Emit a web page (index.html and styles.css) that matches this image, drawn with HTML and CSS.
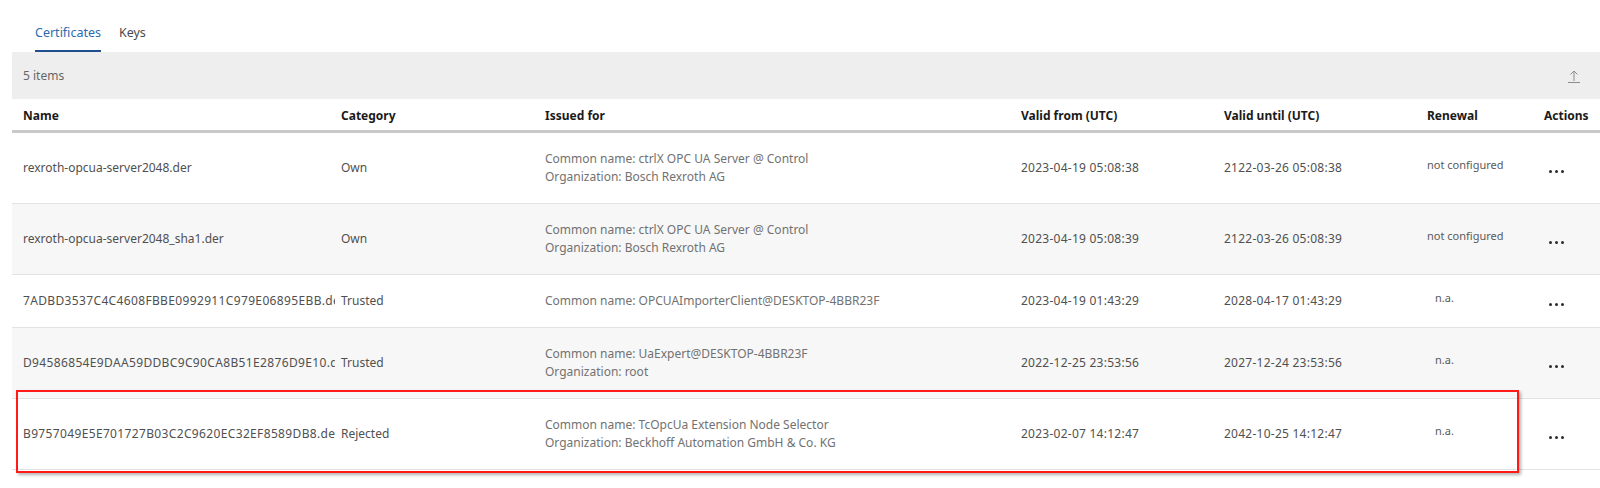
FILE: index.html
```html
<!DOCTYPE html>
<html lang="en">
<head>
    <meta charset="UTF-8">
    <meta name="viewport" content="width=device-width, initial-scale=1.0">
    <title>Certificates</title>
    <link rel="stylesheet" href="styles.css">
</head>
<body>
    <div class="page">
        <div class="tabs">
            <div class="tab tab-active">Certificates</div>
            <div class="tab">Keys</div>
        </div>

        <div class="toolbar">
            <span class="item-count">5 items</span>
            <svg class="export-icon" width="12" height="14" viewBox="0 0 12 14">
                <path d="M6 12V2M2.5 5.5L6 2l3.5 3.5M0 13.5h12" fill="none" stroke="currentColor" stroke-width="1"/>
            </svg>
        </div>

        <table class="cert-table">
            <colgroup>
                <col class="col-name">
                <col class="col-category">
                <col class="col-issued">
                <col class="col-date">
                <col class="col-date">
                <col class="col-renewal">
                <col class="col-actions">
            </colgroup>
            <thead>
                <tr>
                    <th>Name</th>
                    <th>Category</th>
                    <th>Issued for</th>
                    <th>Valid from (UTC)</th>
                    <th>Valid until (UTC)</th>
                    <th>Renewal</th>
                    <th>Actions</th>
                </tr>
            </thead>
            <tbody>
                <tr>
                    <td><span class="name-text">rexroth-opcua-server2048.der</span></td>
                    <td>Own</td>
                    <td class="cell-issued">Common name: ctrlX OPC UA Server @ Control<br>Organization: Bosch Rexroth AG</td>
                    <td class="cell-date">2023-04-19 05:08:38</td>
                    <td class="cell-date">2122-03-26 05:08:38</td>
                    <td class="cell-renewal">not configured</td>
                    <td class="cell-actions"><span class="dots"><i></i><i></i><i></i></span></td>
                </tr>
                <tr>
                    <td><span class="name-text">rexroth-opcua-server2048_sha1.der</span></td>
                    <td>Own</td>
                    <td class="cell-issued">Common name: ctrlX OPC UA Server @ Control<br>Organization: Bosch Rexroth AG</td>
                    <td class="cell-date">2023-04-19 05:08:39</td>
                    <td class="cell-date">2122-03-26 05:08:39</td>
                    <td class="cell-renewal">not configured</td>
                    <td class="cell-actions"><span class="dots"><i></i><i></i><i></i></span></td>
                </tr>
                <tr>
                    <td><span class="name-text name-hash">7ADBD3537C4C4608FBBE0992911C979E06895EBB.der</span></td>
                    <td>Trusted</td>
                    <td class="cell-issued">Common name: OPCUAImporterClient@DESKTOP-4BBR23F</td>
                    <td class="cell-date">2023-04-19 01:43:29</td>
                    <td class="cell-date">2028-04-17 01:43:29</td>
                    <td class="cell-renewal renewal-na">n.a.</td>
                    <td class="cell-actions"><span class="dots"><i></i><i></i><i></i></span></td>
                </tr>
                <tr>
                    <td><span class="name-text name-hash">D94586854E9DAA59DDBC9C90CA8B51E2876D9E10.der</span></td>
                    <td>Trusted</td>
                    <td class="cell-issued">Common name: UaExpert@DESKTOP-4BBR23F<br>Organization: root</td>
                    <td class="cell-date">2022-12-25 23:53:56</td>
                    <td class="cell-date">2027-12-24 23:53:56</td>
                    <td class="cell-renewal renewal-na">n.a.</td>
                    <td class="cell-actions"><span class="dots"><i></i><i></i><i></i></span></td>
                </tr>
                <tr>
                    <td><span class="name-text name-hash">B9757049E5E701727B03C2C9620EC32EF8589DB8.der</span></td>
                    <td>Rejected</td>
                    <td class="cell-issued">Common name: TcOpcUa Extension Node Selector<br>Organization: Beckhoff Automation GmbH &amp; Co. KG</td>
                    <td class="cell-date">2023-02-07 14:12:47</td>
                    <td class="cell-date">2042-10-25 14:12:47</td>
                    <td class="cell-renewal renewal-na">n.a.</td>
                    <td class="cell-actions"><span class="dots"><i></i><i></i><i></i></span></td>
                </tr>
            </tbody>
        </table>

        <div class="highlight-box"></div>
    </div>
</body>
</html>
```

FILE: styles.css
```css
* {
    margin: 0;
    padding: 0;
    box-sizing: border-box;
}

html,
body {
    min-height: 100%;
}

body {
    font-family: 'Noto Sans', 'Open Sans', sans-serif;
    font-size: 12px;
    color: #505050;
    background: #fff;
}

.page {
    position: relative;
    margin-left: 12px;
    padding-bottom: 19px;
}

/* Tabs */
.tabs {
    display: flex;
    gap: 18px;
    padding-left: 23px;
}

.tab {
    padding: 24px 0 8px;
    font-size: 12.5px;
    line-height: 18px;
    color: #4a4a4a;
    border-bottom: 2px solid transparent;
}

.tab-active {
    color: #2b6cb0;
    border-bottom-color: #1f4f8c;
}

/* Toolbar */
.toolbar {
    height: 47px;
    display: flex;
    align-items: center;
    justify-content: space-between;
    padding: 0 20px 0 11px;
    background: #eeeeee;
}

.item-count {
    color: #666;
}

.export-icon {
    color: #8c8c8c;
}

/* Table */
.cert-table {
    width: 100%;
    border-collapse: collapse;
    table-layout: fixed;
}

.col-name { width: 329px; }
.col-category { width: 204px; }
.col-issued { width: 476px; }
.col-date { width: 203px; }
.col-renewal { width: 117px; }
.col-actions { width: 56px; }

.cert-table th {
    text-align: left;
    font-weight: 700;
    color: #1a1a1a;
    line-height: 18px;
    padding: 8px 6px 5px 0;
    border-bottom: 3px solid #c9c9c9;
}

.cert-table td {
    line-height: 18px;
    padding: 17px 6px 17px 0;
    border-bottom: 1px solid #e3e3e3;
    white-space: nowrap;
    vertical-align: middle;
}

.cert-table th:first-child,
.cert-table td:first-child {
    padding-left: 11px;
}

.cert-table tbody tr:nth-child(even) td {
    background: #f7f7f7;
}

.name-text {
    display: block;
    overflow: hidden;
    text-overflow: clip;
}

.name-hash {
    letter-spacing: 0.35px;
}

.cell-date {
    letter-spacing: 0.25px;
}

.cell-issued {
    color: #727272;
}

.cert-table .cell-renewal {
    font-size: 11px;
    color: #5a5a5a;
    padding-top: 14px;
    padding-bottom: 20px;
}

.cert-table .renewal-na {
    padding-left: 8px;
}

.cert-table .cell-actions {
    padding-top: 20px;
    padding-bottom: 14px;
}

.dots {
    display: flex;
    align-items: center;
    gap: 3px;
    height: 18px;
    padding-left: 5px;
}

.dots i {
    width: 3px;
    height: 3px;
    border-radius: 50%;
    background: #2a2a2a;
}

/* Red marker around the rejected row */
.highlight-box {
    position: absolute;
    z-index: 1;
    left: 4px;
    top: 390px;
    width: 1503px;
    height: 83px;
    border: 2px solid #ff1a1a;
    box-shadow: 2px 2px 3px rgba(0, 0, 0, 0.3);
    pointer-events: none;
}
```
